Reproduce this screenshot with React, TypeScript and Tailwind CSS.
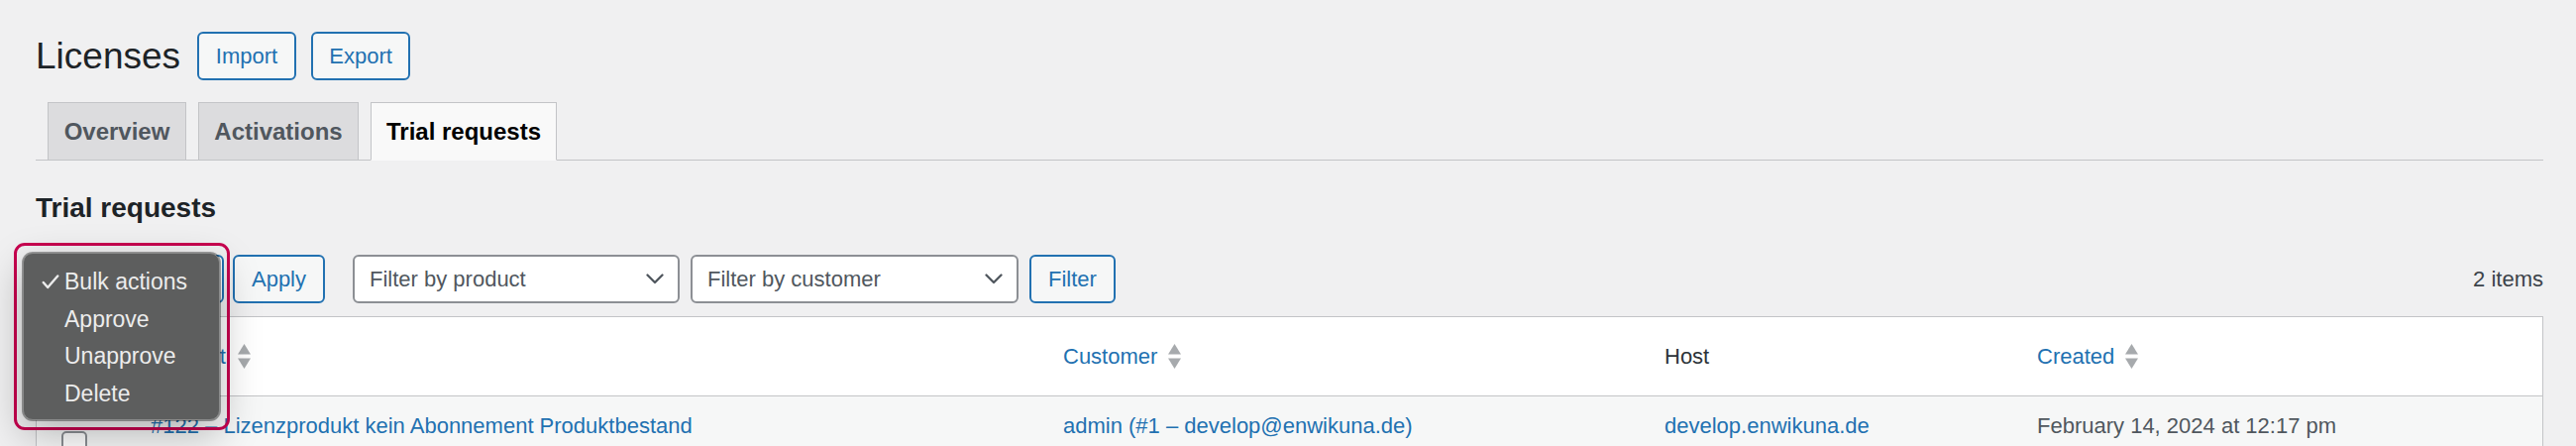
import React from 'react';

const font = { fontFamily: '"Liberation Sans", Arial, sans-serif' };

function SortIcon() {
  return (
    <svg width="13" height="25" viewBox="0 0 13 25" className="shrink-0">
      <path d="M6.5 0 L13 10.5 H0 Z" fill="#a7aaad" />
      <path d="M0 14.5 H13 L6.5 25 Z" fill="#a7aaad" />
    </svg>
  );
}

function Chevron() {
  return (
    <svg width="18" height="11" viewBox="0 0 18 11" className="shrink-0">
      <path d="M1.5 1.5 L9 9 L16.5 1.5" fill="none" stroke="#50575e" strokeWidth="2.3" strokeLinecap="round" strokeLinejoin="round" />
    </svg>
  );
}

function Select({ label, width, focused }: { label: string; width: string; focused?: boolean }) {
  return (
    <div
      className={`${width} h-[49px] flex items-center justify-between pl-[15px] pr-[14px] bg-white rounded-[6px] border-2 ${
        focused ? 'border-[#2271b1]' : 'border-[#8c8f94]'
      } text-[22px] text-[#50575e]`}
    >
      <span>{label}</span>
      <Chevron />
    </div>
  );
}

function OutlineButton({ children, width }: { children: React.ReactNode; width: string }) {
  return (
    <div
      className={`${width} h-[49px] flex items-center justify-center rounded-[6px] border-2 border-[#2271b1] bg-[#f6f7f7] text-[22px] text-[#2271b1]`}
    >
      {children}
    </div>
  );
}

function Checkbox() {
  return <div className="w-[26px] h-[26px] rounded-[5px] border-2 border-[#8c8f94] bg-white" />;
}

function BulkMenu() {
  const items = ['Approve', 'Unapprove', 'Delete'];
  return (
    <>
      <div className="absolute left-[14px] top-[245px] w-[218px] h-[189px] rounded-[11px] border-[3px] border-[#c8004f]" />
      <div className="absolute left-[23px] top-[255px] w-[199px] h-[169px] rounded-[10px] bg-[#5d5e5e] border border-[#8a8b8b] shadow-[0_0_0_1px_rgba(0,0,0,0.35),0_14px_40px_rgba(0,0,0,0.28)] pt-[10px] text-[23px] leading-[37.7px] text-[#ececec]">
        <div className="flex items-center pl-[18px]">
          <svg width="18" height="15" viewBox="0 0 18 15" className="mr-[5px]">
            <path d="M1.8 8 L6.2 13 L16.2 1.5" fill="none" stroke="#ececec" strokeWidth="2.4" strokeLinecap="round" strokeLinejoin="round" />
          </svg>
          <span>Bulk actions</span>
        </div>
        {items.map((i) => (
          <div key={i} className="pl-[41px]">
            {i}
          </div>
        ))}
      </div>
    </>
  );
}

export default function App() {
  const cols = 'grid grid-cols-[99px_921px_607px_376px_1fr]';
  return (
    <div style={font} className="relative w-[2600px] h-[450px] overflow-hidden bg-[#f0f0f1] pl-[36px] pr-[33px] pt-[32px]">
      {/* title row */}
      <div className="flex items-center h-[49px]">
        <h1 className="text-[37px] leading-[49px] text-[#1d2327] mr-[17px]">Licenses</h1>
        <OutlineButton width="w-[100px]">Import</OutlineButton>
        <div className="w-[15px]" />
        <OutlineButton width="w-[100px]">Export</OutlineButton>
      </div>

      {/* tabs */}
      <div className="mt-[22px] flex items-end gap-[12px] pl-[12px] border-b border-[#c3c4c7]">
        <div className="w-[140px] h-[59px] -mb-px flex items-center justify-center border border-[#c3c4c7] bg-[#dcdcde] text-[24px] font-bold text-[#50575e]">
          Overview
        </div>
        <div className="w-[162px] h-[59px] -mb-px flex items-center justify-center border border-[#c3c4c7] bg-[#dcdcde] text-[24px] font-bold text-[#50575e]">
          Activations
        </div>
        <div className="w-[188px] h-[59px] -mb-px flex items-center justify-center border border-[#c3c4c7] border-b-[#f9f9f9] bg-[#f9f9f9] text-[24px] font-bold text-[#000]">
          Trial requests
        </div>
      </div>

      <h2 className="mt-[30px] text-[28px] leading-[36px] font-bold text-[#1d2327]">Trial requests</h2>

      {/* toolbar */}
      <div className="mt-[29px] flex items-center h-[49px]">
        <Select label="Bulk actions" width="w-[190px]" focused />
        <div className="w-[9px]" />
        <OutlineButton width="w-[93px]">Apply</OutlineButton>
        <div className="w-[28px]" />
        <Select label="Filter by product" width="w-[330px]" />
        <div className="w-[11px]" />
        <Select label="Filter by customer" width="w-[331px]" />
        <div className="w-[11px]" />
        <OutlineButton width="w-[87px]">Filter</OutlineButton>
        <span className="ml-auto text-[22px] text-[#3c434a]">2 items</span>
      </div>

      {/* table */}
      <div className="mt-[13px] border border-[#c3c4c7] bg-white text-[22px] leading-[30px]">
        <div className={`${cols} h-[80px] items-center border-b border-[#c3c4c7]`}>
          <div className="pl-[25px]">
            <Checkbox />
          </div>
          <div className="pl-4 flex items-center gap-[12px] text-[#2271b1]">
            <span>Product</span>
            <SortIcon />
          </div>
          <div className="pl-4 flex items-center gap-[11px] text-[#2271b1]">
            <span>Customer</span>
            <SortIcon />
          </div>
          <div className="pl-4 text-[#2c3338]">Host</div>
          <div className="pl-4 flex items-center gap-[11px] text-[#2271b1]">
            <span>Created</span>
            <SortIcon />
          </div>
        </div>
        <div className={`${cols} h-[80px] bg-[#f6f7f7]`}>
          <div className="pl-[25px] pt-[35px]">
            <Checkbox />
          </div>
          <div className="pl-4 pt-[15px] text-[#2271b1]">#122 – Lizenzprodukt kein Abonnement Produktbestand</div>
          <div className="pl-4 pt-[15px] text-[#2271b1]">admin (#1 – develop@enwikuna.de)</div>
          <div className="pl-4 pt-[15px] text-[#2271b1]">develop.enwikuna.de</div>
          <div className="pl-4 pt-[15px] text-[#50575e]">February 14, 2024 at 12:17 pm</div>
        </div>
      </div>

      <BulkMenu />
    </div>
  );
}
